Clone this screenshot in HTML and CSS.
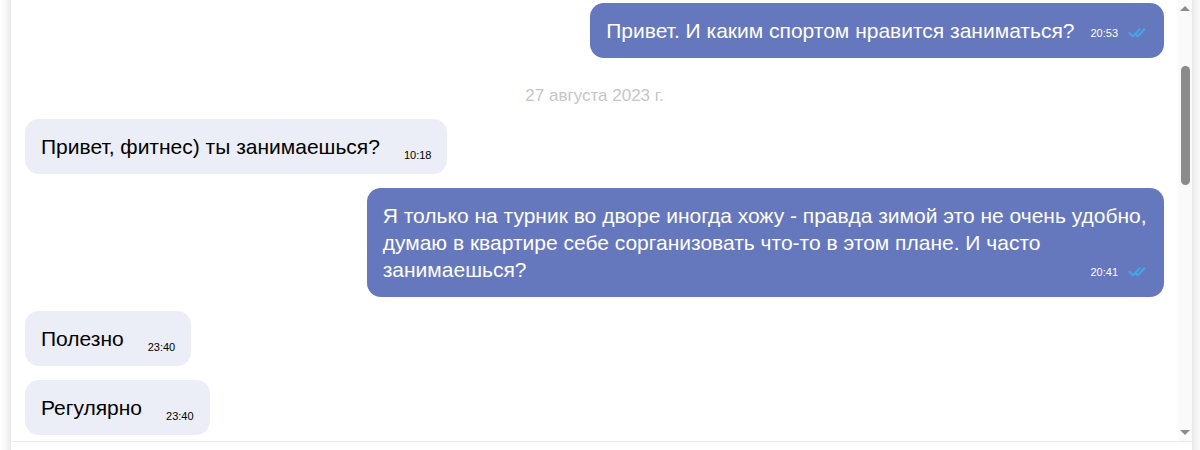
FILE: index.html
```html
<!DOCTYPE html>
<html lang="ru">
<head>
    <meta charset="UTF-8">
    <meta name="viewport" content="width=device-width, initial-scale=1.0">
    <title>Сообщения</title>
    <link rel="stylesheet" href="styles.css">
</head>
<body>

    <!-- Shared icons -->
    <svg class="icon-defs" aria-hidden="true">
        <symbol id="icon-read" viewBox="0 0 18 12">
            <path d="M0.8 5.2 L5 9.4 L12 1.8" />
            <path d="M7.6 7.2 L9.8 9.4 L16.8 1.8" />
        </symbol>
    </svg>

    <div class="chat">
        <div class="chat-body">

            <!-- Message list -->
            <main class="messages">
                <div class="message outgoing">
                    <span class="message-text">Привет. И каким спортом нравится заниматься?</span>
                    <span class="message-meta"><time>20:53</time><svg class="icon-read"><use href="#icon-read" /></svg></span>
                </div>

                <div class="date-divider">27 августа 2023 г.</div>

                <div class="message incoming">
                    <span class="message-text">Привет, фитнес) ты занимаешься?</span>
                    <span class="message-meta"><time>10:18</time></span>
                </div>

                <div class="message outgoing">
                    <span class="message-text">Я только на турник во дворе иногда хожу - правда зимой это не очень удобно, думаю в квартире себе сорганизовать что-то в этом плане. И часто занимаешься?</span>
                    <span class="message-meta"><time>20:41</time><svg class="icon-read"><use href="#icon-read" /></svg></span>
                </div>

                <div class="message incoming">
                    <span class="message-text">Полезно</span>
                    <span class="message-meta"><time>23:40</time></span>
                </div>

                <div class="message incoming">
                    <span class="message-text">Регулярно</span>
                    <span class="message-meta"><time>23:40</time></span>
                </div>
            </main>

            <!-- Scrollbar -->
            <div class="scrollbar" aria-hidden="true">
                <span class="scroll-arrow up"></span>
                <div class="scroll-track">
                    <div class="scroll-thumb"></div>
                </div>
                <span class="scroll-arrow down"></span>
            </div>
        </div>
    </div>

</body>
</html>
```
FILE: styles.css
```css
/* General reset */
* {
    margin: 0;
    padding: 0;
    box-sizing: border-box;
}

/* Theme colors */
:root {
    --outgoing: #6678bd;
    --incoming: #ebeef6;
    --accent: #44a6e8;
    --muted: #c6c6c6;
    --scroll: #8b8b8b;
}

body {
    font-family: Arial, "Liberation Sans", sans-serif;
    font-size: 21px;
    line-height: 27px;
    color: #000;
    background: #fff;
    overflow: hidden;
}

.icon-defs {
    display: none;
}

/* Chat panel, runs past the top and bottom of the window */
.chat {
    min-height: calc(100vh + 40px);
    margin: -20px 8px -20px 11px;
    padding-top: 20px;
    background: #fff;
    box-shadow: 0 0 12px rgba(0, 0, 0, 0.18);
}

.chat-body {
    display: flex;
    border-bottom: 1px solid #ebebeb;
}

/* Message list */
.messages {
    flex: 1;
    display: flex;
    flex-direction: column;
    align-items: flex-start;
    gap: 14px;
    padding: 3px 14px 6px;
}

.message {
    max-width: 70%;
    padding: 14px 16px;
    border-radius: 14px;
}

.message.outgoing {
    align-self: flex-end;
    color: #fff;
    background: var(--outgoing);
}

.message.incoming {
    background: var(--incoming);
}

/* Time and read status */
.message-meta {
    float: right;
    display: flex;
    align-items: center;
    gap: 10px;
    margin: 17px 0 0 24px;
    font-size: 11px;
    line-height: 10px;
}

.outgoing .message-meta {
    margin: 10px 2px 0 16px;
}

.icon-read {
    width: 18px;
    height: 12px;
    fill: none;
    stroke: var(--accent);
    stroke-width: 2;
}

.date-divider {
    align-self: center;
    margin: 10px 0 -4px;
    font-size: 17px;
    color: var(--muted);
}

/* Scrollbar */
.scrollbar {
    display: flex;
    flex-direction: column;
    align-items: center;
    width: 14px;
    padding: 6px 0;
    background: #fafafa;
}

.scroll-arrow {
    border: 5px solid transparent;
}

.scroll-arrow.up {
    border-top: 0;
    border-bottom-color: var(--scroll);
}

.scroll-arrow.down {
    border-bottom: 0;
    border-top-color: var(--scroll);
}

.scroll-track {
    flex: 1;
    width: 9px;
    padding-top: 55px;
}

.scroll-thumb {
    height: 119px;
    border-radius: 5px;
    background: var(--scroll);
}
```
